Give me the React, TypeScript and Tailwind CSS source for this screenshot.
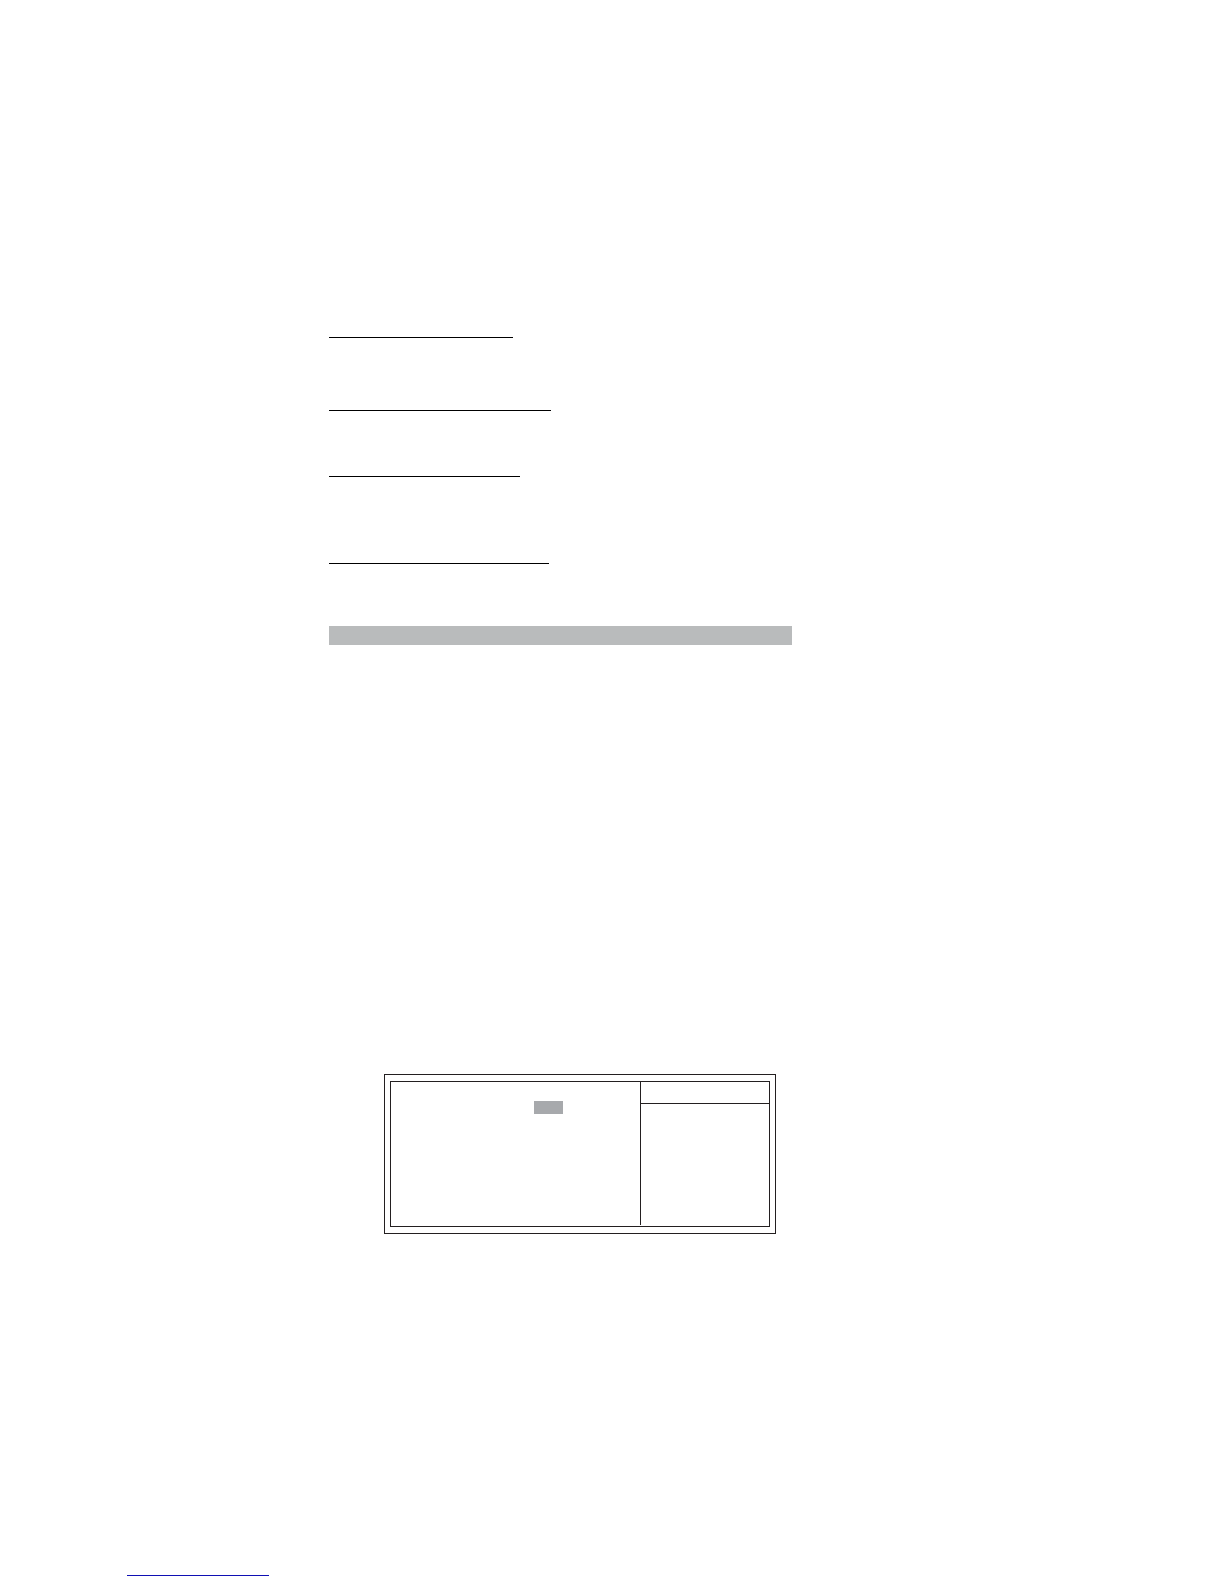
interface Rule {
  id: string;
  className: string;
}

const rules: Rule[] = [
  { id: 'first', className: 'max-w-[184px]' },
  { id: 'second', className: 'mt-[72px] max-w-[222px]' },
  { id: 'third', className: 'mt-[65px] max-w-[191px]' },
  { id: 'fourth', className: 'mt-[86px] max-w-[220px]' },
];

function HeadingRules() {
  return (
    <section>
      {rules.map((rule) => (
        <hr key={rule.id} className={`h-px border-0 bg-black ${rule.className}`} />
      ))}
      <div className="mt-[62px] h-[19px] max-w-[463px] bg-[#b9bbbc]" />
    </section>
  );
}

function SetupPanel() {
  return (
    <section className="ml-[55px] mt-[429px] max-w-[392px] border border-[#231f20] px-[5px] py-1.5">
      <div className="flex min-h-[146px] border border-[#231f20]">
        <div className="flex-1 pl-[143px] pt-[19px]">
          <div className="h-[13px] w-[29px] bg-[#a7a9ac]" />
        </div>
        {/* the divider stops just short of the bottom frame */}
        <div className="mb-px w-[129px] border-l border-[#231f20]">
          <div className="h-[22px] border-b border-[#231f20]" />
        </div>
      </div>
    </section>
  );
}

export default function App() {
  return (
    <div className="min-h-screen bg-white font-['Liberation_Sans',sans-serif]">
      <main className="pl-[329px] pr-6 pt-[337px]">
        <HeadingRules />
        <SetupPanel />
      </main>
      <footer className="mt-[341px] pb-2 pl-[127px] pr-6">
        <hr className="h-px max-w-[142px] border-0 bg-[#1010b4]" />
      </footer>
    </div>
  );
}
